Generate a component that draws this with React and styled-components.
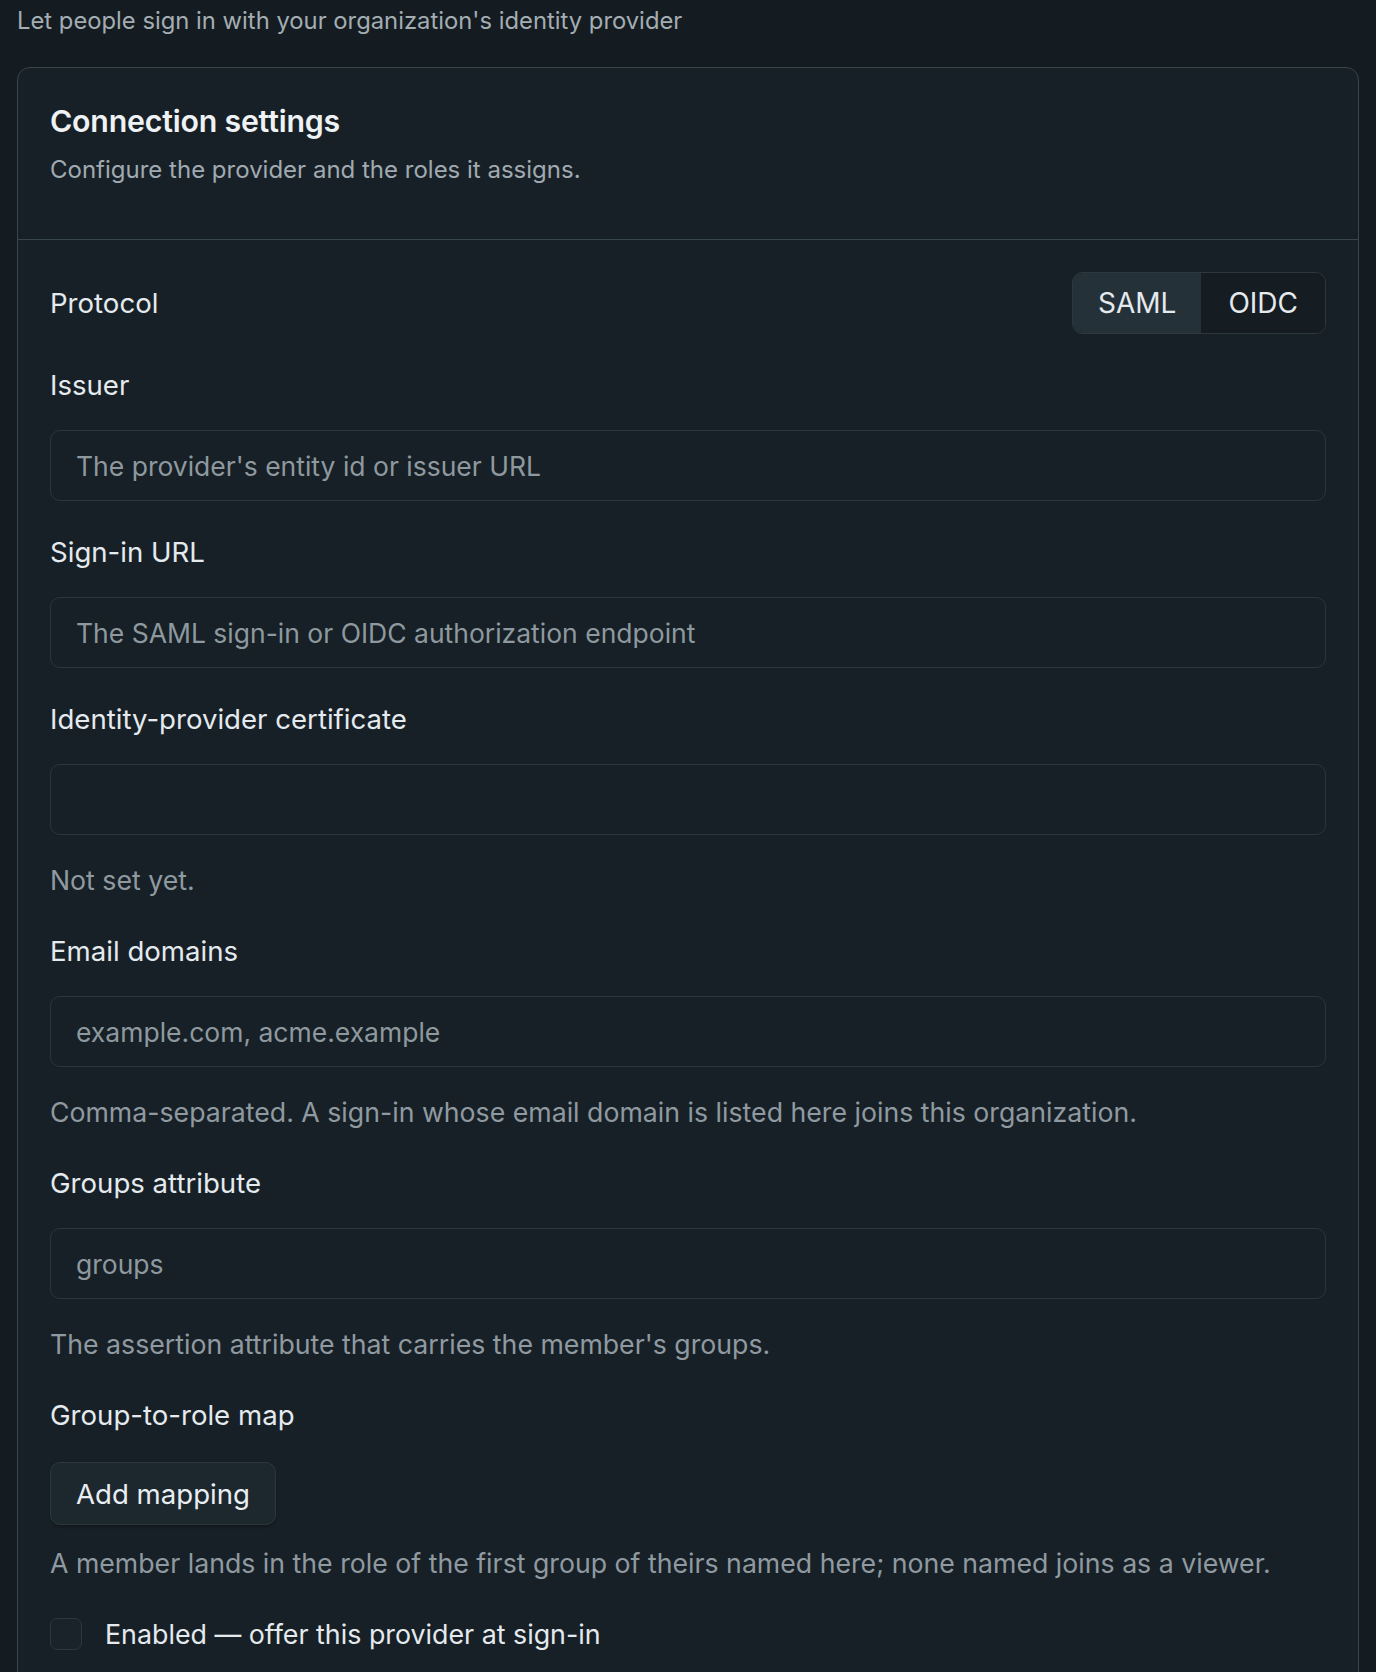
import styled, { createGlobalStyle } from "styled-components";
import { useState } from "react";

const GlobalStyle = createGlobalStyle`
  html, body {
    margin: 0;
    padding: 0;
    background: #141b21;
  }
  body {
    font-family: Inter, "Noto Sans", "Liberation Sans", sans-serif;
    color: #e4eaed;
    -webkit-font-smoothing: antialiased;
  }
  * {
    box-sizing: border-box;
  }
`;

const App = () => {
  // protocol toggle
  const [protocol, setProtocol] = useState("SAML");
  const [enabled, setEnabled] = useState(false);

  return (
    <Page>
      <GlobalStyle />
      <Intro>Let people sign in with your organization's identity provider</Intro>

      <Card>
        <CardHeader>
          <CardTitle>Connection settings</CardTitle>
          <CardDesc>Configure the provider and the roles it assigns.</CardDesc>
        </CardHeader>

        <CardBody>
          <ProtocolRow>
            <Label>Protocol</Label>
            <Segmented>
              {["SAML", "OIDC"].map((p) => (
                <SegButton
                  key={p}
                  $active={protocol === p}
                  onClick={() => setProtocol(p)}
                >
                  {p}
                </SegButton>
              ))}
            </Segmented>
          </ProtocolRow>

          <Field>
            <Label>Issuer</Label>
            <Input placeholder="The provider's entity id or issuer URL" />
          </Field>

          <Field>
            <Label>Sign-in URL</Label>
            <Input placeholder="The SAML sign-in or OIDC authorization endpoint" />
          </Field>

          <Field>
            <Label>Identity-provider certificate</Label>
            <Input />
            <Help>Not set yet.</Help>
          </Field>

          <Field>
            <Label>Email domains</Label>
            <Input placeholder="example.com, acme.example" />
            <Help>
              Comma-separated. A sign-in whose email domain is listed here joins
              this organization.
            </Help>
          </Field>

          <Field>
            <Label>Groups attribute</Label>
            <Input placeholder="groups" />
            <Help>The assertion attribute that carries the member's groups.</Help>
          </Field>

          <Field>
            <Label>Group-to-role map</Label>
            <AddButton type="button">Add mapping</AddButton>
            <Help $tight>
              A member lands in the role of the first group of theirs named here;
              none named joins as a viewer.
            </Help>
          </Field>

          <CheckRow>
            <CheckBox
              type="checkbox"
              checked={enabled}
              onChange={(e) => setEnabled(e.target.checked)}
            />
            <span>Enabled — offer this provider at sign-in</span>
          </CheckRow>
        </CardBody>
      </Card>
    </Page>
  );
};

// styled-components
const Page = styled.div`
  padding: 3px 17px 40px 17px;
`;

const Intro = styled.div`
  font-size: 23.8px;
  line-height: 36px;
  color: #a3adb2;
  margin-bottom: 28px;
`;

const Card = styled.div`
  background: #182027;
  border: 1px solid #37454c;
  border-radius: 13px;
`;

const CardHeader = styled.div`
  padding: 34px 32px 51px 32px;
  border-bottom: 1px solid #37454c;
`;

const CardTitle = styled.div`
  font-size: 30.3px;
  line-height: 39px;
  font-weight: 600;
  color: #eef2f4;
  letter-spacing: -0.2px;
`;

const CardDesc = styled.div`
  margin-top: 11px;
  font-size: 24px;
  line-height: 36px;
  color: #a0aab0;
`;

const CardBody = styled.div`
  padding: 32px 32px 40px 32px;
  display: flex;
  flex-direction: column;
  gap: 31px;
`;

const ProtocolRow = styled.div`
  display: flex;
  justify-content: space-between;
  align-items: center;
`;

const Field = styled.div`
  display: flex;
  flex-direction: column;
  align-items: flex-start;
  gap: 25px;
`;

const Label = styled.div`
  font-size: 27.6px;
  line-height: 40px;
  color: #e4eaed;
`;

const Segmented = styled.div`
  display: flex;
  height: 62px;
  border: 1px solid #2c373e;
  border-radius: 10px;
  overflow: hidden;
  background: #161d22;
`;

const SegButton = styled.button`
  border: none;
  margin: 0;
  padding: 0 ${(p) => (p.$active ? "25px" : "27px")};
  font-family: inherit;
  font-size: 28px;
  color: #e4eaed;
  cursor: pointer;
  background: ${(p) => (p.$active ? "#253139" : "#161d22")};
`;

const Input = styled.input`
  width: 100%;
  height: 71px;
  padding: 0 25px;
  border: 1px solid #2b363c;
  border-radius: 10px;
  background: #172026;
  font-family: inherit;
  font-size: 26.5px;
  color: #e4eaed;
  outline: none;

  &::placeholder {
    color: #8e999f;
  }
`;

const Help = styled.div`
  margin-top: ${(p) => (p.$tight ? "-7px" : "0")};
  font-size: 26.7px;
  line-height: 40px;
  color: #8f9aa0;
`;

const AddButton = styled.button`
  margin-top: 2px;
  height: 63px;
  padding: 0 25px;
  border: 1px solid #2c373e;
  border-radius: 10px;
  background: #1d272e;
  box-shadow: 0 2px 3px rgba(0, 0, 0, 0.25);
  font-family: inherit;
  font-size: 27.6px;
  color: #e8eef1;
  cursor: pointer;
`;

const CheckRow = styled.label`
  display: flex;
  align-items: center;
  gap: 23px;
  font-size: 26.8px;
  line-height: 40px;
  color: #e4eaed;
`;

const CheckBox = styled.input`
  appearance: none;
  margin: 0;
  width: 32px;
  height: 32px;
  border: 1px solid #2c373e;
  border-radius: 7px;
  background: #1a2329;
`;

export default App;
